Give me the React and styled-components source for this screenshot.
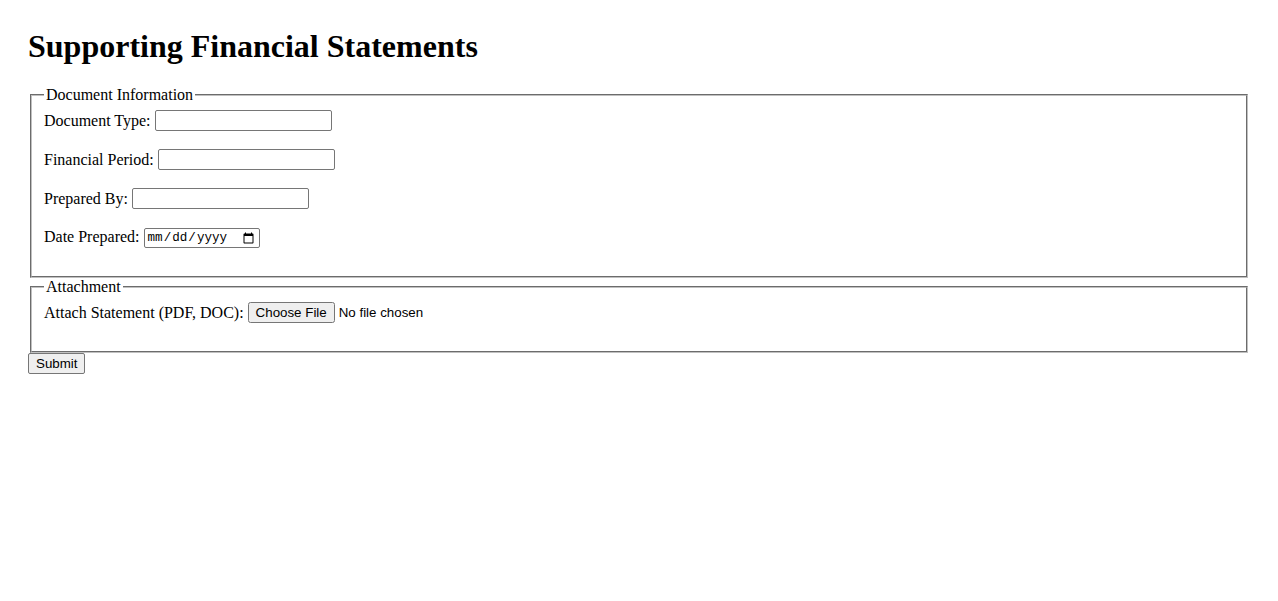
import React from 'react';
import styled, { createGlobalStyle } from 'styled-components';

const GlobalStyle = createGlobalStyle`
  body {
    margin: 0;
    padding: 28px;
    background: #fff;
    color: #000;
    font-family: "Liberation Serif", "Times New Roman", serif;
    font-size: 16px;
  }
`;

const Title = styled.h1`
  margin: 0 0 21.44px;
  font-size: 32px;
  font-weight: bold;
`;

const Fieldset = styled.fieldset`
  margin: 0 2px;
  padding: 0.35em 0.75em 0.625em;
  border: 2px groove rgb(192, 192, 192);
  min-inline-size: min-content;
`;

const Legend = styled.legend`
  padding: 0 2px;
`;

const Label = styled.label`
  vertical-align: -1px;
`;

const TextInput = styled.input`
  font-family: "Liberation Sans", Arial, sans-serif;
  font-size: 13.33px;
  width: 177px;
  box-sizing: border-box;
  height: 21px;
  padding: 1px 2px;
  border: 1px solid #767676;
  border-radius: 2px;
`;

const DateInput = styled.input`
  font-family: "Liberation Mono", "Courier New", monospace;
  font-size: 12.6px;
  width: 116px;
  box-sizing: border-box;
  height: 20px;
  padding: 1px 2px;
  border: 1px solid #767676;
  border-radius: 2px;
`;

const FileInput = styled.input`
  font-family: "Liberation Sans", Arial, sans-serif;
  font-size: 13.33px;
`;

const Button = styled.button`
  font-family: "Liberation Sans", Arial, sans-serif;
  font-size: 13.33px;
  padding: 2px 7px;
  border: 1px solid #767676;
  border-radius: 2px;
  background: #efefef;
  color: #000;
`;

const fields = [
  { id: 'docType', label: 'Document Type:' },
  { id: 'period', label: 'Financial Period:' },
  { id: 'preparedBy', label: 'Prepared By:' },
];

export default function App() {
  return (
    <>
      <GlobalStyle />
      <Title>Supporting Financial Statements</Title>
      <form onSubmit={e => e.preventDefault()}>
        <Fieldset>
          <Legend>Document Information</Legend>
          {fields.map(f => (
            <React.Fragment key={f.id}>
              <Label htmlFor={f.id}>{f.label}</Label> <TextInput type="text" id={f.id} />
              <br />
              <br />
            </React.Fragment>
          ))}
          <Label htmlFor="datePrepared">Date Prepared:</Label> <DateInput type="date" id="datePrepared" />
          <br />
          <br />
        </Fieldset>
        <Fieldset>
          <Legend>Attachment</Legend>
          <Label htmlFor="attach">Attach Statement (PDF, DOC):</Label>{' '}
          <FileInput type="file" id="attach" accept=".pdf,.doc,.docx" />
          <br />
          <br />
        </Fieldset>
        <Button type="submit">Submit</Button>
      </form>
    </>
  );
}
